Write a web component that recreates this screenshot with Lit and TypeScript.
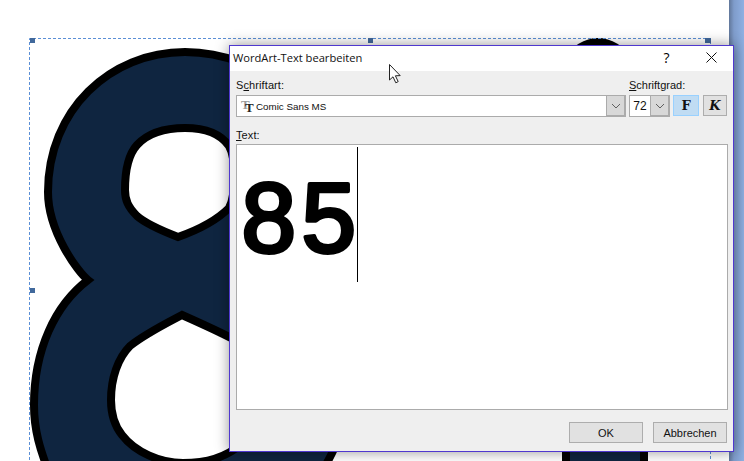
import { LitElement, html, css, svg } from "lit";
import { customElement } from "lit/decorators.js";

const chevron = html`<svg class="chev" width="10" height="6" viewBox="0 0 10 6"><path d="M1 1 L5 5 L9 1" fill="none" stroke="#606060" stroke-width="1"/></svg>`;

const art = svg`
  <path d="M88 280 C78 272 48 232 48 192 C48 110 110 52 185 52 C262 52 330 110 330 192 C330 232 300 272 288 280 C310 300 345 350 345 405 C345 425 338 445 320 475 L50 475 C40 450 34 430 34 405 C34 350 55 305 88 280 Z" fill="#0f2540" stroke="#000" stroke-width="8" stroke-linejoin="miter"/>
  <path d="M178 237 C160 230 146 224 137 216 C128 207 125 200 125 190 C125 170 128 155 137 145 C148 133 165 128 185 128 C205 128 220 133 229 146 C236 158 236 195 229 208 C215 222 195 231 178 237 Z" fill="#fff" stroke="#000" stroke-width="8"/>
  <path d="M182 315 C165 324 145 334 130 346 C118 358 111 378 111 400 C111 415 114 425 122 435 C135 452 160 463 183 463 C205 463 225 458 240 445 C252 430 252 360 235 340 C220 332 200 323 182 315 Z" fill="#fff" stroke="#000" stroke-width="8"/>
  <path d="M562 470 L562 440 L648 440 L648 470 Z" fill="#0f2540"/>
  <path d="M566 470 L566 440 M644 470 L644 440" stroke="#000" stroke-width="8"/>
  <path d="M560 60 C572 46 585 38 598 38 C611 38 624 46 636 60 Z" fill="#000"/>
  <path d="M29.5 470 L29.5 38.5 L710.5 38.5 L710.5 470" fill="none" stroke="#5b8fd6" stroke-width="1" stroke-dasharray="3 2"/>
  <rect x="30" y="38" width="5" height="5" fill="#41699c"/>
  <rect x="368" y="38" width="5" height="5" fill="#41699c"/>
  <rect x="705" y="38" width="6" height="5" fill="#41699c"/>
  <rect x="30" y="288" width="5" height="5" fill="#41699c"/>
`;

@customElement("app-root")
export class AppRoot extends LitElement {
  static styles = css`
    :host {
      display: flex;
      position: relative;
      width: 744px;
      height: 461px;
      overflow: hidden;
      font-family: "Liberation Sans", Arial, sans-serif;
      font-size: 11px;
      color: #111;
    }
    .page { width: 729px; height: 461px; background: #fff; flex: none; }
    .page svg { display: block; }
    .side { flex: 1; background: linear-gradient(90deg, #61779a, #7f9ccb 5px, #8fb0e2); }
    .dialog {
      position: absolute;
      left: 229px;
      top: 45px;
      width: 505px;
      height: 407px;
      box-sizing: border-box;
      border: 1px solid #4f38cf;
      background: #efefef;
      box-shadow: 0 0 13px rgba(0, 0, 0, 0.42);
      display: flex;
      flex-direction: column;
    }
    .title {
      height: 25px;
      box-sizing: border-box;
      padding: 0 0 2px 3px;
      background: #fff;
      display: flex;
      align-items: center;
      flex: none;
    }
    .title .t { flex: 1; font-family: "Open Sans", sans-serif; font-size: 11.15px; color: #111; }
    .help { width: 21px; text-align: center; font-size: 14px; font-family: "Open Sans", sans-serif; margin-right: 29px; color: #000; }
    .close { margin-right: 16px; display: block; }
    .body {
      flex: 1;
      display: flex;
      flex-direction: column;
      padding: 7px 5px 8px 6px;
      min-height: 0;
    }
    .top { display: flex; gap: 3px; }
    .col { display: flex; flex-direction: column; }
    .col.grow { flex: 1; }
    .col.right { width: 99px; }
    label { display: block; height: 17px; line-height: 14px; letter-spacing: 0.1px; }
    .col.right label { letter-spacing: 0; }
    .combo {
      height: 22px;
      box-sizing: border-box;
      display: flex;
      align-items: stretch;
      border: 1px solid #ababab;
      background: #fff;
    }
    .combo .val { flex: 1; display: flex; align-items: center; gap: 0; padding-left: 4px; font-size: 9.8px; color: #111; }
    .combo .btn {
      width: 17px;
      background: #d8d8d8;
      border-left: 1px solid #ababab;
      border-right: 1px solid #ababab;
      border-bottom: 1px solid #ababab;
      display: flex;
      align-items: center;
      justify-content: center;
    }
    .size { width: 41px; flex: none; }
    .size .val { justify-content: center; padding-left: 0; font-size: 12px; }
    .ctrl { display: flex; gap: 3px; align-items: flex-start; }
    .tog {
      height: 21px;
      box-sizing: border-box;
      display: flex;
      align-items: center;
      justify-content: center;
      font-family: "DejaVu Serif", serif;
      font-weight: 700;
      font-size: 13px;
      border: 1px solid #adadad;
      background: #e1e1e1;
      color: #111;
    }
    .tog.f { width: 26px; background: #c0dcf3; border-color: #99d1ff; }
    .tog.k { width: 24px; margin-left: 1px; font-style: italic; }
    .txtlabel { margin-top: 11px; height: 16px; line-height: 14px; }
    .area {
      flex: 1;
      min-height: 0;
      box-sizing: border-box;
      border: 1px solid #ababab;
      background: #fff;
      padding: 2px 0 0 1px;
      display: flex;
      align-items: flex-start;
    }
    .big { display: block; flex: none; overflow: visible; }
    .big text {
      font-family: "Liberation Sans", sans-serif;
      font-size: 98px;
      letter-spacing: 5.5px;
      fill: #000;
      stroke: #000;
      stroke-width: 4px;
      stroke-linejoin: round;
      stroke-linecap: round;
    }
    .caret { width: 1px; height: 135px; background: #000; flex: none; }
    .foot { display: flex; justify-content: flex-end; gap: 10px; margin-top: 12px; padding-right: 1px; flex: none; }
    button {
      width: 74px;
      height: 21px;
      box-sizing: border-box;
      border: 1px solid #adadad;
      background: #e1e1e1;
      font: inherit;
      color: #111;
      padding: 0;
    }
    u { text-decoration-thickness: 1px; text-underline-offset: 1px; }
    .cursor { position: absolute; left: 389px; top: 64px; display: block; }
    .tt { display: block; flex: none; overflow: visible; }
  `;

  render() {
    return html`
      <div class="page">
        <svg width="729" height="461" viewBox="0 0 729 461">${art}</svg>
      </div>
      <div class="side"></div>
      <div class="dialog">
        <div class="title">
          <span class="t">WordArt-Text bearbeiten</span>
          <span class="help">?</span>
          <svg class="close" width="11" height="11" viewBox="0 0 11 11"><path d="M0.5 0.5 L10.5 10.5 M10.5 0.5 L0.5 10.5" stroke="#111" stroke-width="1"/></svg>
        </div>
        <div class="body">
          <div class="top">
            <div class="col grow">
              <label>S<u>c</u>hriftart:</label>
              <div class="combo">
                <div class="val">
                  <svg class="tt" width="15" height="14" viewBox="0 0 15 14" font-family="Liberation Serif, serif" font-weight="700">
                    <text x="0" y="10" font-size="13" fill="#9a9a9a">T</text>
                    <text x="4" y="13" font-size="13" fill="#222">T</text>
                  </svg>
                  <span>Comic Sans MS</span>
                </div>
                <div class="btn">${chevron}</div>
              </div>
            </div>
            <div class="col right">
              <label><u>S</u>chriftgrad:</label>
              <div class="ctrl">
                <div class="combo size">
                  <div class="val">72</div>
                  <div class="btn">${chevron}</div>
                </div>
                <div class="tog f">F</div>
                <div class="tog k">K</div>
              </div>
            </div>
          </div>
          <label class="txtlabel"><u>T</u>ext:</label>
          <div class="area">
            <svg class="big" width="119" height="135" viewBox="0 0 119 135"><text x="3.5" y="105">85</text></svg>
            <span class="caret"></span>
          </div>
          <div class="foot">
            <button>OK</button>
            <button>Abbrechen</button>
          </div>
        </div>
      </div>
      <svg class="cursor" width="14" height="20" viewBox="0 0 14 20">
        <path d="M0.5 0.5 L0.5 16 L4 12.8 L6.8 18.8 L9.2 17.6 L6.4 11.8 L11.2 11.6 Z" fill="#fff" stroke="#222" stroke-width="1"/>
      </svg>
    `;
  }
}
